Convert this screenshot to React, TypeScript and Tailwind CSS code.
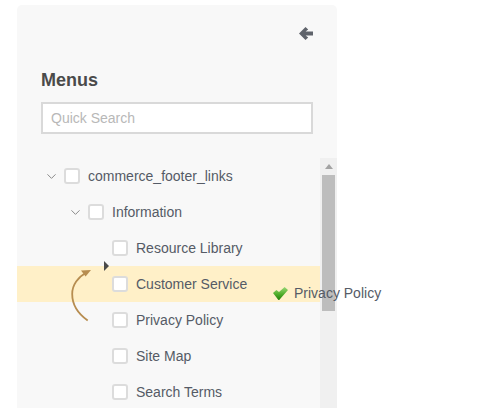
import { ChevronDown } from 'lucide-react'

interface TreeRow {
  label: string
  level: number
  expandable?: boolean
  highlighted?: boolean
}

const rows: TreeRow[] = [
  { label: 'commerce_footer_links', level: 0, expandable: true },
  { label: 'Information', level: 1, expandable: true },
  { label: 'Resource Library', level: 2 },
  { label: 'Customer Service', level: 2, highlighted: true },
  { label: 'Privacy Policy', level: 2 },
  { label: 'Site Map', level: 2 },
  { label: 'Search Terms', level: 2 },
]

const levelPadding = ['pl-[28px]', 'pl-[52px]', 'pl-[76px]']

function Row({ label, level, expandable, highlighted }: TreeRow) {
  return (
    <div className={`flex h-9 shrink-0 items-center ${levelPadding[level]} ${highlighted ? 'bg-[#fff0c8]' : ''}`}>
      <span className="flex w-[19px] shrink-0 items-center">
        {expandable && <ChevronDown size={15} strokeWidth={1.6} className="-ml-px shrink-0 text-[#8a8a8a]" />}
      </span>
      <span className="h-4 w-4 shrink-0 rounded-[3px] border-2 border-[#dcdcdc] bg-white" />
      <span className="ml-2 whitespace-nowrap text-[14px] text-[#555b66]">{label}</span>
    </div>
  )
}

export default function App() {
  return (
    <div className="relative h-[408px] w-[494px] overflow-hidden bg-white font-['Liberation_Sans',Arial,sans-serif]">
      <div className="absolute left-[17px] top-[5px] flex h-[403px] w-[320px] flex-col rounded-t-[5px] bg-[#f8f8f8]">
        <div className="flex h-[22px] shrink-0 justify-end pr-[24px] pt-[22px]">
          <svg width="14" height="13" viewBox="0 0 14 13" className="shrink-0 text-[#5f636b]">
            <path d="M6.5 0 L9.2 2.6 L6.6 4.5 H14 V8.5 H6.6 L9.2 10.4 L6.5 13 L0 6.5 Z" fill="currentColor" />
          </svg>
        </div>
        <h2 className="mt-[42px] px-6 text-[18px] font-bold leading-[22px] text-[#4a4a4a]">Menus</h2>
        <div className="mt-[11px] px-6">
          <input
            readOnly
            placeholder="Quick Search"
            className="h-8 w-[272px] border-2 border-[#d9d9d9] bg-white px-2 text-[14px] outline-none placeholder:text-[#b8b8b8]"
          />
        </div>
        <div className="mt-6 flex min-h-0 flex-1">
          <div className="flex min-w-0 flex-1 flex-col overflow-hidden">
            {rows.map((row) => (
              <Row key={row.label} {...row} />
            ))}
          </div>
          <div className="flex w-[17px] shrink-0 flex-col items-center bg-[#f0f0f0]">
            <svg width="8" height="5" viewBox="0 0 8 5" className="mt-[6px] shrink-0">
              <path d="M4 0 L8 5 H0 Z" fill="#a3a3a3" />
            </svg>
            <div className="mt-[6px] h-[136px] w-[13px] bg-[#bdbdbd]" />
          </div>
        </div>
      </div>

      {/* insert marker + curved move arrow */}
      <svg width="5" height="10" viewBox="0 0 5 10" className="absolute left-[104px] top-[261px]">
        <path d="M0 0 L5 5 L0 10 Z" fill="#4a4a4a" />
      </svg>
      <svg width="24" height="56" viewBox="0 0 24 56" className="absolute left-[70px] top-[267px]">
        <path d="M17.7 53.5 C7 46 2.2 36 2.2 27 C2.2 18 8 10 16.5 5.5" fill="none" stroke="#b78d50" strokeWidth="1.8" />
        <path d="M21 3 L11 3.6 L15.6 9.4 Z" fill="#b78d50" />
      </svg>

      {/* drag ghost */}
      <div className="absolute left-[273px] top-[285px] flex h-4 items-center">
        <svg width="15" height="13" viewBox="0 0 15 13" className="shrink-0">
          <defs>
            <linearGradient id="tick" x1="0" y1="0" x2="0" y2="1">
              <stop offset="0" stopColor="#9ad878" />
              <stop offset="0.55" stopColor="#4fae2a" />
              <stop offset="1" stopColor="#237f0a" />
            </linearGradient>
          </defs>
          <path d="M0 6 L3.4 3 L6 5 L11.6 0 L15 3 L6.2 13 L5.4 13 Z" fill="url(#tick)" />
        </svg>
        <span className="ml-[6px] whitespace-nowrap text-[14px] text-[#555b66]">Privacy Policy</span>
      </div>
    </div>
  )
}
